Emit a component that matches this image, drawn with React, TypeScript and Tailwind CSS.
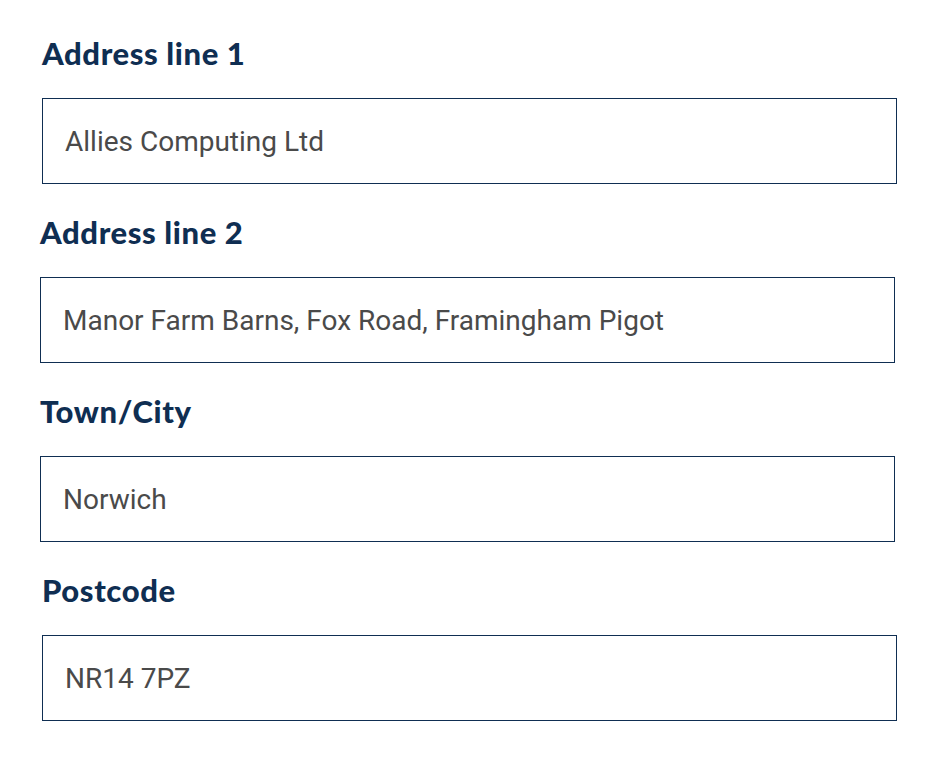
const fields = [
  { label: 'Address line 1', value: 'Allies Computing Ltd', shift: true },
  { label: 'Address line 2', value: 'Manor Farm Barns, Fox Road, Framingham Pigot', shift: false },
  { label: 'Town/City', value: 'Norwich', shift: false },
  { label: 'Postcode', value: 'NR14 7PZ', shift: true },
];

export default function App() {
  return (
    <div className="min-h-[766px] w-[940px] bg-white pt-[38px] pl-[40px] pr-[43px]">
      <div className="flex flex-col gap-[33px]">
        {fields.map((f) => (
          <div key={f.label} className={f.shift ? 'ml-[2px]' : 'mr-[2px]'}>
            <label className="block text-[31px] leading-none font-black tracking-[0.6px] text-[#0f2e52] mb-[29px] [font-family:Lato,'Noto_Sans',sans-serif]">
              {f.label}
            </label>
            <input
              readOnly
              value={f.value}
              className="block w-full h-[86px] box-border border border-[#0f2e52] bg-white px-[22px] text-[28px] text-[#4a4a4a] outline-none [font-family:Roboto,sans-serif]"
            />
          </div>
        ))}
      </div>
    </div>
  );
}
